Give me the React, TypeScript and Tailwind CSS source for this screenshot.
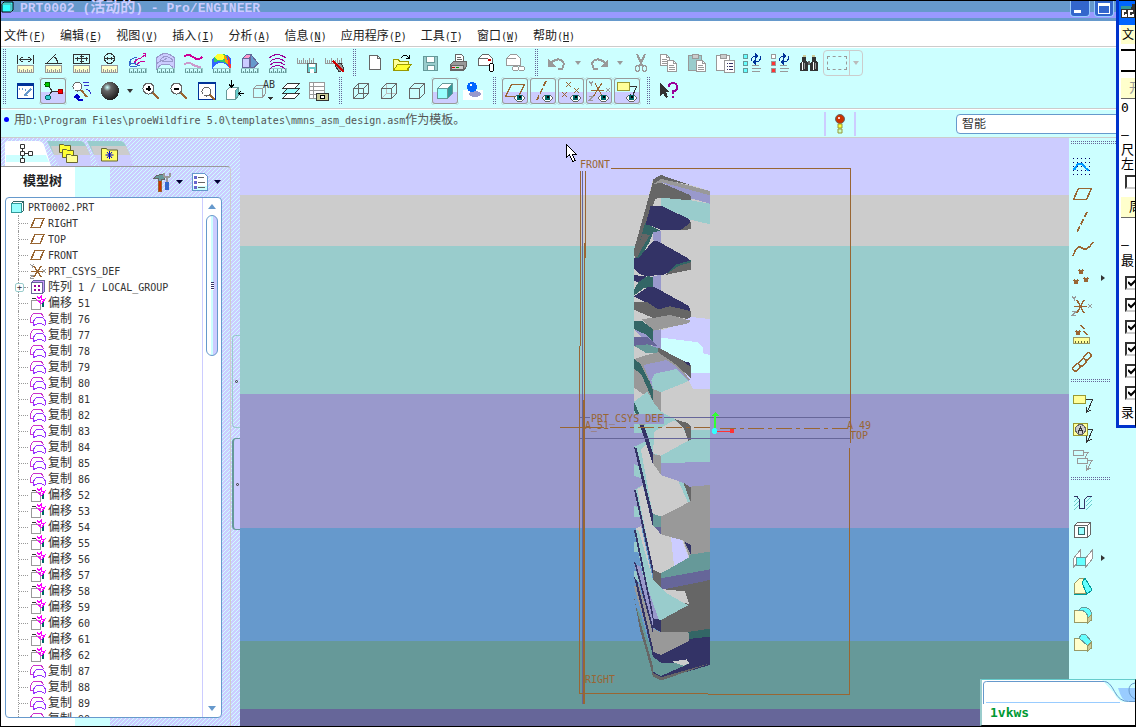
import type { ReactNode } from 'react';

const MONO = "font-['DejaVu_Sans_Mono','Noto_Sans_CJK_SC',monospace]";
const HATCH =
  'bg-[linear-gradient(135deg,#ccffff_12.5%,#ccccff_12.5%,#ccccff_50%,#ccffff_50%,#ccffff_62.5%,#ccccff_62.5%)] bg-[size:4px_4px]';
const DOTS = 'bg-[conic-gradient(#666699_25%,transparent_0)] bg-[size:2px_2px]';

/* Latin runs are set smaller than the Chinese ones so that both keep a 6px / 12px grid */
function Mixed({ text }: { text: string }) {
  return (
    <>
      {text.split(/([\u3000-\u9fff]+)/).map((part, i) => (
        <span key={i} className={i % 2 ? 'text-[12px]' : 'text-[10px]'}>{part}</span>
      ))}
    </>
  );
}

function Ico({ children, stroke = '#333333' }: { children: ReactNode; stroke?: string }) {
  return (
    <svg viewBox="0 0 24 24" fill="none" stroke={stroke} shapeRendering="crispEdges" className="size-6 shrink-0" aria-hidden="true">
      {children}
    </svg>
  );
}

/* ---------- shared icon parts ---------- */

const Ruler = (
  <g>
    <rect x="4.5" y="14.5" width="16" height="7" fill="#ffffcc" stroke="#999999" />
    <path d="M6.5 18v3M8.5 19v2M10.5 18v3M12.5 19v2M14.5 18v3M16.5 19v2M18.5 18v3" stroke="#999999" />
  </g>
);
const RulerSmall = (
  <g>
    <path d="M4 17.5h17v4h-17z" fill="#ccffff" stroke="#99cccc" />
    <path d="M4.5 18v4M6.5 20v2M8.5 18v4M10.5 20v2M12.5 18v4M14.5 20v2M16.5 18v4M18.5 20v2M20.5 18v4" stroke="#669999" />
  </g>
);
const RulerTicks = <path d="M4.5 7v5M6.5 9v3M8.5 9v3M10.5 7v5M12.5 9v3M14.5 9v3M16.5 7v5M18.5 9v3M20.5 7v5M4 12.5h18" stroke="#999999" />;
const Eye = (
  <g>
    <path d="M11 19l3-3h5l3 3-3 3h-5z" fill="#ffffff" stroke="#666666" />
    <rect x="14" y="16" width="5" height="5" fill="#006666" stroke="none" />
    <rect x="16" y="17" width="2" height="2" fill="#000000" stroke="none" />
  </g>
);
const Page = ({ x, y, c = '#999999' }: { x: number; y: number; c?: string }) => (
  <g transform={`translate(${x} ${y})`} stroke={c}>
    <path d="M.5 .5h6l3 3v8h-9z" fill="#ffffff" />
    <path d="M6.5 .5v3h3M2 5.5h5M2 7.5h6M2 9.5h6" />
  </g>
);
const Note = (
  <g>
    <rect x="2.5" y="3.5" width="12" height="8" fill="#ffff99" stroke="#999933" />
    <path d="M15 7.5h6.5l-5 12M15.5 15v5.500l5-3" stroke="#333333" />
  </g>
);
const Binocular = (
  <g>
    <path d="M5 6h4v4l2 2v8H3v-8l2-2zM15 6h4v4l2 2v8h-8v-8l2-2z" fill="#333333" stroke="none" />
    <path d="M11 10h2v4h-2z" fill="#666666" stroke="none" />
    <path d="M5.5 11v8M16.5 11v8" stroke="#ffffff" /><path d="M7.5 12v6M18.5 12v6" stroke="#999999" />
    <path d="M6 4.500h3M15 4.500h3" stroke="#cccc99" strokeWidth="2" />
  </g>
);

/* ---------- toolbar icons ---------- */

const icons = {
  distance: <Ico>{Ruler}<path d="M4.5 4v9M20.5 4v9M6 8.5h13M9.5 6l-3 2.500 3 2.500M15.5 6l3 2.500-3 2.500" /></Ico>,
  angle: <Ico>{Ruler}<path d="M4 12.5h17M6 12L15 3M13 6q4 2 3 6" /></Ico>,
  area: <Ico>{Ruler}<path d="M4.5 3.5h16v9h-16zM12.5 3v10M6 7.5h13M8 5.5v4M17 5.5v4M10.5 5.5h4M10.5 10.5h4" /></Ico>,
  diameter: <Ico>{Ruler}<circle cx="12.5" cy="7.5" r="5" /><path d="M7 7.5h11M10.5 6v3M14.5 6v3" /></Ico>,
  curvature: (
    <Ico>{RulerSmall}
      <path d="M8 7q-5 3-3 8M12 6q-9 2-6 8M4 12.5h6M5 15.5h7M10 8v5l5 2" stroke="#3366cc" />
      <path d="M9 12q2-4 7-5l5-4M11 14q4-4 9-4" stroke="#cc0099" /><path d="M18 2l3 1-1 3" stroke="#cc0099" />
    </Ico>
  ),
  surface: (
    <Ico stroke="#9999cc">
      <path d="M3.5 7q9-9 18 0v12q-3-6-9-6t-9 6z" fill="#ccccff" />
      <path d="M7 9q4-6 10-2t-1 4-6-1 4-3M3.500 13q4-4 6-3" />{RulerSmall}
    </Ico>
  ),
  waves: <Ico>{RulerSmall}<path d="M3 6q4-4 9 0t9 0" stroke="#cc0099" strokeWidth="2" /><path d="M3 14q4-4 8-1t9 3" stroke="#cc99cc" strokeWidth="2" /></Ico>,
  rainbow: (
    <Ico>
      <path d="M3 8q9-10 19-1v13q-4-8-10-8t-9 7z" fill="#3366ff" stroke="none" />
      <path d="M5 6q8-6 13-1v8q-5-4-13-2z" fill="#33cc66" stroke="none" />
      <ellipse cx="11" cy="6" rx="5" ry="3" fill="#ffff33" stroke="none" />
      <path d="M17 3q5 4 5 16l-3-5q1-6-2-11z" fill="#ff3333" stroke="none" />
      <path d="M15 4q4 3 4 9l-3-2z" fill="#ff9900" stroke="none" />{RulerSmall}
    </Ico>
  ),
  draft: (
    <Ico stroke="#666699">{RulerSmall}
      <path d="M5.500 7.500h7v9h-7z" fill="#ccccff" />
      <path d="M5.500 7.500l4-4h5l-2 4z" fill="#ff99cc" /><path d="M14 3.500l7 9-4 4h-4v-9z" fill="#6699cc" />
    </Ico>
  ),
  arcs: <Ico stroke="#990099">{RulerSmall}<path d="M4 7q8-7 17 0M5 10.500q7-6 15 0M5 14q7-6 15 0M5 17.500q7-6 15 0" /></Ico>,
  saveAnalysis: <Ico>{RulerTicks}<path d="M14.5 12.5h9v9h-9z" fill="#66cccc" stroke="#666666" /><path d="M16 13h6v3h-6zM17 18h4v4h-4z" fill="#ffffff" stroke="none" /></Ico>,
  dropAnalysis: <Ico>{RulerTicks}<path d="M14 14l6-2 3 6-5 3z" fill="#999999" /><path d="M12 10l11 11" stroke="#cc0000" strokeWidth="2" /></Ico>,

  newFile: <Ico stroke="#666666"><path d="M6.5 4.5h8l3 3v11h-11z" fill="#ffffff" /><path d="M14.5 4.5v3h3" /></Ico>,
  open: (
    <Ico stroke="#999900">
      <path d="M2.5 8.5h5l1 2h9v9h-15z" fill="#ffff99" /><path d="M2.5 19.5l4-6h14l-5 6z" fill="#ffff33" />
      <path d="M10 7q4-5 8 0M18.5 4v4M15 7.5h4" stroke="#000000" />
    </Ico>
  ),
  save: <Ico stroke="#669999"><path d="M4.5 5.5h14v14h-14z" fill="#99cccc" /><path d="M7.5 5.5h8v6h-8zM8.5 14.5h7v5h-7z" fill="#ffffff" /></Ico>,
  print: (
    <Ico stroke="#666666">
      <path d="M8.5 11.5v-8h6l2 2v6z" fill="#ffffff" /><path d="M10 6.5h4M10 8.5h5" />
      <path d="M3.5 13.5l3-3h13v5l-3 4h-13z" fill="#999999" /><path d="M4 14h12v4h-12z" fill="#cccccc" />
      <path d="M5 16.5h3" stroke="#cc0000" /><path d="M9 16.5h3" stroke="#009900" />
    </Ico>
  ),
  mail: (
    <Ico stroke="#666666">
      <path d="M3.5 14.5v-7l4-4h6l4 4v7z" fill="#ffffff" /><path d="M4 7.500h9" /><path d="M13 8.5h3" stroke="#cc0000" strokeWidth="2" />
      <rect x="14.5" y="12.5" width="4" height="8" rx="2" fill="#ffffff" stroke="#000000" />
    </Ico>
  ),
  mailLink: (
    <Ico stroke="#999999">
      <path d="M3.5 14.5v-7l4-4h6l4 4v7z" fill="#ffffff" /><path d="M4 7.500h9" />
      <rect x="9.5" y="15.5" width="6" height="4" rx="2" fill="#ffffff" /><rect x="15.5" y="15.5" width="6" height="4" rx="2" fill="#ffffff" />
    </Ico>
  ),
  undo: <Ico stroke="#999999"><path d="M6 12q5-5 10-3t1 9h-4" strokeWidth="2" /><path d="M3 8v8h8z" fill="#999999" stroke="none" /></Ico>,
  redo: <Ico stroke="#999999"><path d="M18 12q-5-5-10-3t-1 9h4" strokeWidth="2" /><path d="M21 8v8h-8z" fill="#999999" stroke="none" /></Ico>,
  cut: <Ico stroke="#999999"><path d="M8 3l4 9 2 4M16 3l-4 9-2 4" strokeWidth="2" /><ellipse cx="8.5" cy="17.5" rx="2" ry="3" /><ellipse cx="15.5" cy="17.5" rx="2" ry="3" /></Ico>,
  copy: <Ico><Page x={3} y={3} /><Page x={10} y={9} /></Ico>,
  paste: <Ico stroke="#999999"><path d="M3.5 4.5h13v15h-13z" fill="#99cccc" /><path d="M7 3h6v4h-6z" fill="#cccccc" /><Page x={11} y={9} /></Ico>,
  pasteSpecial: <Ico stroke="#999999"><path d="M3.5 4.5h13v15h-13z" fill="#ffffff" /><path d="M7 3h6v4h-6z" fill="#cccccc" /><path d="M11.5 9.5h10v12h-10z" fill="#ffffff" /><path d="M14 12.5h1M16 12.5h4M14 15.5h1M16 15.5h4M14 18.5h1M16 18.5h4" stroke="#333366" /></Ico>,
  regen: (
    <Ico stroke="#669999">
      <path d="M2.5 3.5h4v4h-4zM2.5 10.5h4v4h-4zM2.5 17.5h4v4h-4z" fill="#66ffff" />
      <path d="M10 10q0-5 5-5M20 5q0 6-6 6" stroke="#003399" /><path d="M14 2l4 3-4 3zM15 8l-4 3 4 3z" fill="#003399" stroke="none" />
      <path d="M11 14.5h7M11 17.5h9M11 20.5h8" stroke="#999999" />
    </Ico>
  ),
  regenManager: (
    <Ico stroke="#999999">
      <path d="M2.5 3.5h4v4h-4z" fill="#ffffff" /><path d="M2.5 10.5h4v4h-4zM2.5 17.5h4v4h-4z" fill="#ff3333" />
      <path d="M10 10q0-5 5-5M20 5q0 6-6 6" stroke="#003399" /><path d="M14 2l4 3-4 3zM15 8l-4 3 4 3z" fill="#003399" stroke="none" />
      <path d="M11 14.5h7M11 17.5h9M11 20.5h8" />
    </Ico>
  ),
  find: <Ico>{Binocular}</Ico>,

  repaint: <Ico stroke="#003399"><path d="M4.5 4.5h16v15h-16z" fill="#ffffff" /><path d="M4 5h17" strokeWidth="3" /><path d="M6 10q9-1 8 9" stroke="#6699cc" strokeDasharray="1 2" strokeWidth="2" /><path d="M11 17l7-7" stroke="#6699cc" strokeWidth="2" /></Ico>,
  spin: (
    <Ico>
      <path d="M7 6l4 6M11 12.5h7M11 12l-4 6" />
      <circle cx="6.5" cy="5.5" r="2.500" fill="#00cc00" stroke="#006600" /><circle cx="19.5" cy="12.5" r="2.500" fill="#ff0000" stroke="#990000" /><circle cx="7" cy="18.5" r="2.500" fill="#33cccc" stroke="#006666" />
    </Ico>
  ),
  orient: <Ico><circle cx="8.5" cy="7.5" r="4.500" fill="#ffffff" stroke="#666666" /><path d="M12 11l6 7" stroke="#996633" strokeWidth="2" /><path d="M14 3.5h6M15 6.5h5M17 11q5-1 4 5" stroke="#3333cc" /><path d="M14 21q-6 1-6-4M5 19l3-3 3 3" stroke="#0000cc" strokeWidth="2" /></Ico>,
  sphere: (
    <Ico stroke="none">
      <defs><radialGradient id="ball" cx=".35" cy=".3" r=".7"><stop offset="0" stopColor="#ccffff" /><stop offset=".3" stopColor="#666666" /><stop offset="1" stopColor="#222222" /></radialGradient></defs>
      <circle cx="13" cy="12" r="9" fill="url(#ball)" />
    </Ico>
  ),
  zoomIn: <Ico stroke="#666666"><circle cx="9.5" cy="9.5" r="5.500" fill="#ffffff" /><path d="M14 14l6 6" stroke="#996633" strokeWidth="2" /><path d="M7 9.5h5M9.5 7v5" stroke="#000000" strokeWidth="2" /></Ico>,
  zoomOut: <Ico stroke="#666666"><circle cx="9.5" cy="9.5" r="5.500" fill="#ffffff" /><path d="M14 14l6 6" stroke="#996633" strokeWidth="2" /><path d="M7 9.5h5" stroke="#000000" strokeWidth="2" /></Ico>,
  refit: <Ico stroke="#003399"><path d="M3.5 3.5h17v17h-17z" fill="#ffffff" /><path d="M3 4h18" strokeWidth="2" /><circle cx="11.5" cy="12.5" r="4.500" stroke="#666666" /><path d="M15 16l5 5" stroke="#996633" strokeWidth="2" /></Ico>,
  reorient: <Ico stroke="#669999"><path d="M3.5 11.5l3-3h9v8l-3 4h-9z" fill="#ffffff" /><path d="M12.5 20.5v-9l3-3v8z" fill="#66cccc" /><path d="M8.5 1v7M6 5.5l2.500 2.500 2.500-2.500M15 14.5h6M18 12l-2.500 2.500 2.500 2.500" stroke="#000000" /></Ico>,
  views: (
    <Ico stroke="#999999">
      <path d="M2.5 9.5l3-3h9v8l-3 4h-9zM2.5 9.500h9v9" fill="#ccffff" />
      <path d="M16 18h6l-3 3z" fill="#333333" stroke="none" />
      <text x="12" y="9" fontSize="10" fill="#333333" stroke="none" fontFamily="DejaVu Sans Mono">AB</text>
    </Ico>
  ),
  layers: <Ico stroke="#333333"><path d="M3.5 19.5l5-5h12l-5 5z" fill="#ffffff" /><path d="M3.5 14.5l5-5h12l-5 5z" fill="#99ffff" /><path d="M3.5 9.5l5-5h12l-5 5z" fill="#ffffff" /></Ico>,
  viewManager: <Ico stroke="#999999"><path d="M2.5 3.5h15v16h-15z" fill="#ffffff" /><path d="M3 7.5h14M3 11.5h14M3 15.5h7M6.5 4v15" /><path d="M9.5 14.5h12v7h-12z" fill="#cccc99" stroke="#333333" /><circle cx="15.5" cy="18" r="2" fill="#fff" stroke="#000" /></Ico>,
  wireframe: <Ico stroke="#666666"><path d="M4.5 9.5h10v10h-10zM9.5 4.5h10v10h-10zM4.5 9.5l5-5M14.5 9.5l5-5M14.5 19.5l5-5M4.5 19.5l5-5" /></Ico>,
  hidden: <Ico stroke="#666666"><path d="M9.5 5v9.500h10M4.5 19.5l5-5" stroke="#bbbbbb" /><path d="M4.5 9.5h10v10h-10zM4.5 9.5l5-5h10v10l-5 5M14.5 9.5l5-5" /></Ico>,
  noHidden: <Ico stroke="#666666"><path d="M4.5 9.5h10v10h-10zM4.5 9.5l5-5h10v10l-5 5M14.5 9.5l5-5" /></Ico>,
  shaded: <Ico stroke="#669999"><path d="M4.5 9.5h10v10h-10z" fill="#99ffff" /><path d="M4.5 9.5l5-5h10l-5 5z" fill="#ffffff" /><path d="M14.5 9.5l5-5v10l-5 5z" fill="#339999" /></Ico>,
  realism: <Ico stroke="none"><path d="M2 11h20v10h-20z" fill="#ffffff" /><ellipse cx="14" cy="15" rx="6" ry="3" fill="#9999cc" /><circle cx="11" cy="8" r="5" fill="#0066ff" /><circle cx="10" cy="6" r="1" fill="#ffffff" /></Ico>,
  planes: <Ico stroke="#996633"><path d="M2.5 17.5l6-12h13l-6 12z" strokeWidth="1.500" />{Eye}</Ico>,
  axes: <Ico stroke="#996633"><path d="M15 2l-9 19" strokeWidth="1.500" strokeDasharray="6 2" />{Eye}</Ico>,
  points: <Ico stroke="#996633"><path d="M7 3l5 5M12 3l-5 5M15 9l5 5M20 9l-5 5M3 13l5 5M8 13l-5 5" />{Eye}</Ico>,
  csys: <Ico stroke="#996633"><path d="M4 11.5h13M6 18l9-14M8 4l7 13" /><path d="M2 2l2 3 2-3M4 5v2M19 9l4 4M23 9l-4 4M2 17.500h4l-4 4h4" stroke="#999999" />{Eye}</Ico>,
  notes: <Ico>{Note}{Eye}</Ico>,
  help: (
    <Ico stroke="none">
      <path d="M3 4v13l3-3 3 5 2-1-2-5h4z" fill="#333333" />
      <path d="M12 8q0-4 4-4t4 4-4 4v3M16 16.500v2" stroke="#990099" strokeWidth="2" />
    </Ico>
  ),

  sketch: (
    <Ico>
      <path d="M2.5 4v17M6.5 4v17M10.5 4v17M14.5 4v17M18.5 4v17" stroke="#000066" strokeDasharray="1 3" />
      <path d="M2 14.500h2l3-5h4l4 5 3 2" stroke="#0099ff" strokeWidth="2" />
    </Ico>
  ),
  plane: <Ico stroke="#996633"><path d="M2.5 17.5l5-11h13l-5 11z" strokeWidth="1.500" /></Ico>,
  axis: <Ico stroke="#996633"><path d="M16 2L6 22" strokeWidth="1.500" strokeDasharray="6 2" /></Ico>,
  curve: <Ico stroke="#996633"><path d="M2 18q4-12 9-8t11-6" strokeWidth="1.500" /></Ico>,
  point: <Ico stroke="#996633"><path d="M8 4l4 4M12 4l-4 4M3 14l4 4M7 14l-4 4M13 12l4 4M17 12l-4 4" strokeWidth="1.500" /></Ico>,
  csysSet: <Ico stroke="#996633"><path d="M3 12.5h13M6 19l7-13M6 6l7 13" strokeWidth="1.500" /><path d="M1 2l2 3 2-3M3 5v2M17 10l4 4M21 10l-4 4M1 17.500h4l-4 4h4" stroke="#999999" /></Ico>,
  analysis: <Ico stroke="#996633"><path d="M5 9l4 4M9 9l-4 4M10 3l3 4M13 9l3 4" strokeWidth="1.500" /><path d="M2.5 15.5h16v6h-16z" fill="#ffff99" stroke="#999966" /><path d="M4.500 19v2M7.500 19v2M10.500 19v2M13.500 19v2M16.500 19v2" stroke="#666633" /></Ico>,
  reference: <Ico stroke="#996633"><g strokeWidth="1.500"><rect x="1" y="15" width="8" height="5" rx="2" transform="rotate(-45 5 17)" /><rect x="7" y="10" width="8" height="5" rx="2" transform="rotate(-45 11 12)" /><rect x="12" y="4" width="8" height="5" rx="2" transform="rotate(-45 16 6)" /></g></Ico>,
  note: <Ico>{Note}</Ico>,
  symbol: <Ico><path d="M2.5 3.5h14v12h-14z" fill="#ffff99" stroke="#999933" /><circle cx="9.5" cy="9.5" r="5" fill="#cccccc" stroke="#666666" /><path d="M7 12.500l2.500-5 2.500 5M8 10.5h3" stroke="#333333" /><path d="M17 9.500h4.500l-5 12M15.500 16v6l5-3" /></Ico>,
  notes2: <Ico stroke="#999999"><path d="M2.5 2.5h10v5h-10zM6.5 10.5h10v5h-10zM13 4.5h4l-3 5M17 12.5h4l-5 9M15.500 17v5l4-2" /></Ico>,
  hole: <Ico stroke="#66cccc"><path d="M3 12l4-4M3 16l5-5M3 20l5-5M15 12l5-5M15 16l6-6M15 20l6-6" /><path d="M3 6.5h3l2.500 3v9h5v-9l3-3h4" stroke="#333366" /></Ico>,
  shell: <Ico stroke="#666666"><path d="M3.5 7.5l3-3h13v12l-3 3h-13z" fill="#ffffff" /><path d="M3.5 7.5h13v12M16.5 7.5l3-3" /><path d="M7.5 9.5h6v7h-6z" fill="#99ffff" stroke="#336666" /></Ico>,
  rib: <Ico stroke="#999999"><path d="M2.5 12.5l7-9v9l-7 9zM14.5 12.5l7-9v9l-7 9z" fill="#ffffff" /><path d="M5.5 11.5h9v8h-9z" fill="#66ffff" stroke="#669999" /></Ico>,
  draftFeature: <Ico stroke="#999966"><path d="M3.5 9.5l5-5h6v15h-11z" fill="#ffffcc" /><path d="M14 4l7 12-5 4-5-11z" fill="#66ffff" stroke="#009999" /><path d="M3 20.5h13" stroke="#009999" /></Ico>,
  round: <Ico stroke="#999966"><path d="M3.5 8.5h5q8 0 8 7v5h-13z" fill="#ffffcc" /><path d="M8 8l3-3q9 0 10 8l-4 3q-1-8-9-8z" fill="#66ffff" stroke="#669999" /><path d="M16.5 16l4-3v5l-4 3z" fill="#cccc99" /></Ico>,
  chamfer: <Ico stroke="#999966"><path d="M3.5 8.5h5l8 7v5h-13z" fill="#ffffcc" /><path d="M8 8l3-4h3l7 8-4 4z" fill="#66ffff" stroke="#669999" /><path d="M16.5 16l4-4v6l-4 3z" fill="#cccc99" /></Ico>,
};

type IconName = keyof typeof icons;

function ToolButton({ name, pressed = false }: { name: IconName; pressed?: boolean }) {
  return (
    <button
      type="button"
      aria-label={name}
      aria-pressed={pressed}
      className={
        'flex h-7 w-7 shrink-0 items-center justify-center ' +
        (pressed ? 'rounded bg-linear-to-b from-[#ccffff] from-55% to-[#ccccff] to-55% shadow-[inset_0_0_0_1px_#ccffff,inset_0_0_0_2px_#999999]' : '')
      }
    >
      {icons[name]}
    </button>
  );
}

const Tools = ({ names, pressed = [] }: { names: IconName[]; pressed?: IconName[] }) => (
  <>{names.map((n) => <ToolButton key={n} name={n} pressed={pressed.includes(n)} />)}</>
);

const Grip = () => <span className={`mx-[5px] h-7 w-1 shrink-0 ${DOTS}`} />;
const FlatGrip = ({ wide = false }) => (
  <span className={`mt-[3px] mb-[7px] ml-px h-1 shrink-0 ${wide ? 'w-12' : 'w-10'} ${DOTS}`} />
);

const DropArrow = ({ color = '#999999', label }: { color?: string; label: string }) => (
  <button type="button" aria-label={label} className="flex h-7 w-3.5 shrink-0 items-center justify-center">
    <svg viewBox="0 0 8 4" className="h-1 w-2" aria-hidden="true"><path d="M1 0h6L4 4z" fill={color} /></svg>
  </button>
);

/* ---------- title, menu, message bar ---------- */

const menus = [
  ['文件', 'F'], ['编辑', 'E'], ['视图', 'V'], ['插入', 'I'], ['分析', 'A'],
  ['信息', 'N'], ['应用程序', 'P'], ['工具', 'T'], ['窗口', 'W'], ['帮助', 'H'],
];

function TitleBar() {
  return (
    <header className="flex h-[21px] shrink-0 items-center justify-between border-t border-black bg-[linear-gradient(#6699cc_11px,#9999ff_11px,#9999ff_17px,#6699cc_17px)] pr-[22px]">
      <h1 className="flex h-full items-start gap-1.5 font-['Liberation_Mono','Noto_Sans_CJK_SC',monospace] text-[13px] leading-4 font-bold text-[#ccccff]">
        <svg viewBox="0 0 13 12" className="h-3 w-[13px]" aria-hidden="true">
          <path d="M1 3l2-2h9v8l-2 2H1z" fill="#33ffff" stroke="#000" /><path d="M1 3h9v8" fill="none" stroke="#669999" />
        </svg>
        <span>PRT0002 (<span className="text-[15px] leading-3">活动的</span>) - Pro/ENGINEER</span>
      </h1>
      <div className="flex h-full gap-1">
        <button type="button" aria-label="最小化" className="flex h-4 w-5 items-end rounded-b-sm border border-t-0 border-[#99ccff] bg-[#3366cc] p-[3px]">
          <span className="h-[3px] w-[7px] bg-white" />
        </button>
        <button type="button" aria-label="最大化" className="flex h-4 w-5 items-center justify-center rounded-b-sm border border-t-0 border-[#99ccff] bg-[#3366cc]">
          <span className="h-[11px] w-3 border border-t-[3px] border-white" />
        </button>
      </div>
    </header>
  );
}

function MessageBar() {
  return (
    <div className="flex h-7 shrink-0 items-center border-b border-[#cccccc] bg-[#ccffff]">
      <p className="flex min-w-0 flex-1 items-center gap-[5px] pb-2 pl-[3px] leading-4 whitespace-nowrap text-[#555555]">
        <span className="size-[5px] rounded-full bg-[#0000ff]" />
        <span><Mixed text="用D:\Program Files\proeWildfire 5.0\templates\mmns_asm_design.asm作为模板。" /></span>
      </p>
      <div className="mr-[100px] flex h-6 w-8 items-center justify-center border-x-2 border-[#ccccff]">
        <svg viewBox="0 0 10 20" className="h-5 w-2.5" aria-hidden="true">
          <circle cx="5" cy="5" r="4.500" fill="#cc3300" stroke="#666666" /><path d="M3 3h2v2H3z" fill="#ffcccc" />
          <path d="M3 10h4v4H3z" fill="#ffff33" stroke="#999933" /><path d="M3 15h4v4H3z" fill="#ccffcc" stroke="#999933" />
        </svg>
      </div>
      <select aria-label="选择过滤器" className={`h-5 w-[180px] shrink-0 appearance-none rounded-sm border border-[#6699cc] bg-white pl-[5px] text-[12px] leading-none text-[#333333] ${MONO}`}>
        <option>智能</option>
      </select>
    </div>
  );
}

/* ---------- model tree ---------- */

type Kind = 'part' | 'plane' | 'csys' | 'pattern' | 'offset' | 'copy';
const range = (from: number, to: number) => Array.from({ length: to - from + 1 }, (_, i) => from + i);

const tree: { kind: Kind; text: string }[] = [
  { kind: 'part', text: 'PRT0002.PRT' },
  { kind: 'plane', text: 'RIGHT' },
  { kind: 'plane', text: 'TOP' },
  { kind: 'plane', text: 'FRONT' },
  { kind: 'csys', text: 'PRT_CSYS_DEF' },
  { kind: 'pattern', text: '阵列 1 / LOCAL_GROUP' },
  { kind: 'offset', text: '偏移 51' },
  ...range(76, 86).map((n) => ({ kind: 'copy' as Kind, text: `复制 ${n}` })),
  ...range(52, 62).map((n) => ({ kind: 'offset' as Kind, text: `偏移 ${n}` })),
  ...range(87, 90).map((n) => ({ kind: 'copy' as Kind, text: `复制 ${n}` })),
];

const treeIcons: Record<Kind, ReactNode> = {
  part: <><path d="M1.5 4.5h10v9h-10z" fill="#99ffff" stroke="#339999" /><path d="M1.5 4.5l2-2h10v9l-2 2M11.5 4.5l2-2" fill="none" stroke="#336666" /></>,
  plane: <path d="M1 12.5l4-9h9l-4 9z" fill="none" stroke="#996633" strokeWidth="1.500" />,
  csys: <><path d="M1 8.5h12M4 14l7-11M4 3l7 11" stroke="#996633" strokeWidth="1.500" /><path d="M0 1l2 2 2-2M2 3v2M12 6l4 4M16 6l-4 4M0 12h4l-4 3h4" fill="none" stroke="#999999" /></>,
  pattern: <><path d="M1.5 3.5l2-2h11v11l-2 2h-11z" fill="#cc99ff" stroke="#666699" /><path d="M1.5 3.5h11v11h-11z" fill="#ffffff" stroke="#666699" /><path d="M4 6h2v2H4zM8 6h2v2H8zM4 10h2v2H4zM8 10h2v2H8z" fill="#990099" /></>,
  offset: (
    <>
      <path d="M1.5 5.5h9v9h-9z" fill="#ffffff" stroke="#999999" /><path d="M2 3.500h4" stroke="#333333" /><path d="M12.500 7v5" stroke="#006666" strokeWidth="2" />
      <path d="M6 4l4 4h2l3-4-4 1V1L9 4 7 1M9 8l2-3" fill="none" stroke="#ff00ff" />
    </>
  ),
  copy: (
    <g fill="none">
      <path d="M.5 12V7q1-5 7-5 5 0 6 4M.500 11.500h2" stroke="#cc33cc" />
      <path d="M3.500 15v-4q1-5 6-5 5 0 6 5v3M3.500 14.500l2-1q5-2 10 1" stroke="#9933ff" />
    </g>
  ),
};

function TreeRow({ kind, text }: { kind: Kind; text: string }) {
  const root = kind === 'part';
  return (
    <li className={'flex h-4 items-center whitespace-nowrap ' + (root ? 'gap-0.5 pl-1' : 'gap-0.5')}>
      {!root && (
        <span className="flex h-4 w-[22px] shrink-0 items-center">
          <span className="ml-3 h-4 w-px border-l border-dotted border-[#999999]" />
          {kind === 'pattern' && (
            <button type="button" aria-label="展开" className="-ml-1 flex size-[9px] items-center justify-center rounded-xs border border-[#99cccc] bg-white text-[9px] leading-none text-[#333333]">+</button>
          )}
          <span className="h-px flex-1 border-t border-dotted border-[#999999]" />
        </span>
      )}
      <svg viewBox="0 0 16 16" className="size-4 shrink-0" shapeRendering="crispEdges" aria-hidden="true">{treeIcons[kind]}</svg>
      <span className="leading-4 text-[#333333]"><Mixed text={text} /></span>
    </li>
  );
}

function TreePanel() {
  return (
    <div className="flex min-h-0 w-[230px] flex-col">
      <div className="flex h-7 shrink-0 items-end pt-[3px]">
        <button type="button" aria-label="模型树" className="h-[25px]">
          <svg viewBox="0 0 46 25" className="ml-1 h-[25px] w-[46px]" aria-hidden="true">
            <path d="M0 25V3q0-3 3-3h30q4 0 6 4l7 21z" fill="#ffffff" /><path d="M1 14h40l3 7H1z" fill="#ccffff" />
            <path d="M15.5 3.5h4v4h-4zM15.5 10.5h4v4h-4zM15.5 17.5h4v4h-4zM23.5 10.5h4v4h-4zM17.5 8v2M17.5 15v2M20 12.5h3" fill="#fff" stroke="#333" />
          </svg>
        </button>
        <button type="button" aria-label="文件夹浏览器" className="-ml-1 h-[25px]">
          <svg viewBox="0 0 44 25" className="h-[25px] w-11" aria-hidden="true">
            <path d="M0 0h33q4 0 6 5l4 9H7z" fill="#99cccc" /><path d="M4 5h35l4 9H7z" fill="#cccccc" /><path d="M7 14h36l1 11H12z" fill="#ccccff" />
            <g fill="#ffff33" stroke="#666633"><path d="M12.5 3.5h4l1 1h6v7h-11z" /><path d="M15.5 8.5h4l1 1h6v7h-11z" /><path d="M19.5 13.5h4l1 1h6v7h-11z" fill="#ffff99" /></g>
          </svg>
        </button>
        <button type="button" aria-label="收藏夹" className="-ml-1 h-[25px]">
          <svg viewBox="0 0 46 25" className="h-[25px] w-[46px]" aria-hidden="true">
            <path d="M0 0h33q4 0 6 5l4 9H7z" fill="#99cccc" /><path d="M4 5h35l4 9H7z" fill="#cccccc" /><path d="M7 14h36l3 11H12z" fill="#ccccff" />
            <path d="M14.5 7.5h5l1 1.500h10v11h-16z" fill="#ffff66" stroke="#666633" /><path d="M22.5 10v8M18.5 14h8M20 11l5 6M25 11l-5 6" stroke="#0000cc" />
          </svg>
        </button>
      </div>
      <div className="flex min-h-0 flex-1 flex-col rounded-tr border-t border-r border-[#999999] border-r-[#cccccc] bg-[linear-gradient(90deg,#ffffff_74px,#ccffff_74px,#ccffff_109px,transparent_109px)] pr-2 pb-2 pl-1">
        <div className="flex h-[30px] shrink-0 items-center">
          <h2 className="flex-1 pb-1 pl-[18px] text-[13px] leading-none font-bold text-[#222222]">模型树</h2>
          <button type="button" aria-label="设置" className="flex h-6 w-[38px] items-center gap-1">
            <svg viewBox="0 0 20 20" className="size-5" shapeRendering="crispEdges" aria-hidden="true">
              <path d="M2 6q3-4 10-3v4H9v2H6V6z" fill="#669999" stroke="#666666" /><path d="M6.500 9v10h3V9" fill="#cc3300" stroke="#996633" />
              <path d="M12 1v3l3 2 3-2V1M15 6v5" fill="none" stroke="#999999" strokeWidth="2" /><path d="M13 10h4v8h-4z" fill="#3366cc" />
            </svg>
            <svg viewBox="0 0 8 4" className="h-1 w-2" aria-hidden="true"><path d="M0 0h7L3.5 4z" fill="#000033" /></svg>
          </button>
          <button type="button" aria-label="显示" className="flex h-6 w-8 items-center gap-1">
            <svg viewBox="0 0 20 20" className="size-5" shapeRendering="crispEdges" aria-hidden="true">
              <path d="M2.5 1.5h12l3 3v14h-15z" fill="#ffffff" stroke="#6699cc" /><path d="M3 14h14v4H3z" fill="#ccffff" />
              <path d="M8 5.5h6M8 10.5h7M8 15.5h7" stroke="#666666" /><path d="M4 4h3v3H4zM4 9h3v3H4zM4 14h3v3H4z" fill="#6666cc" />
            </svg>
            <svg viewBox="0 0 8 4" className="h-1 w-2" aria-hidden="true"><path d="M0 0h7L3.5 4z" fill="#000033" /></svg>
          </button>
        </div>
        <div className="flex min-h-0 flex-1 overflow-hidden rounded border border-[#6699cc] bg-white">
          <ul className="min-w-0 flex-1 overflow-hidden pt-px">
            {tree.map((row) => <TreeRow key={row.text} {...row} />)}
          </ul>
          <div className="flex w-[19px] flex-col items-center border-l border-[#ccccff] py-1">
            <svg viewBox="0 0 8 5" className="mt-0.5 h-[5px] w-2" aria-hidden="true"><path d="M0 5h8L4 0z" fill="#6699cc" /></svg>
            <span className="mt-1.5 flex h-[141px] w-3 items-center justify-center rounded-full border border-[#6699cc] bg-[linear-gradient(90deg,#ffffff_40%,#ccffff_40%,#ccffff_60%,#ccccff_60%)]">
              <span className="h-2 w-[3px] bg-[repeating-linear-gradient(#333366_0_1px,#ffffff_1px_2px)]" />
            </span>
            <svg viewBox="0 0 8 5" className="mt-auto mb-0.5 h-[5px] w-2" aria-hidden="true"><path d="M0 0h8L4 5z" fill="#6699cc" /></svg>
          </div>
        </div>
      </div>
    </div>
  );
}

/* ---------- graphics area ---------- */

const upperTeeth: [string, string][] = [
  ['#cccccc', '279,133 303,122 450,168 450,900 222,900 222,345'],
  ['#999999', '279,135 303,130 450,168 450,183 303,143 279,152'],
  ['#9999cc', '303,141 450,181 450,206 392,190'],
  ['#666666', '279,133 303,120 392,150 303,132 279,148'],
  ['#666666', '279,148 303,143 385,178 392,185 392,196 345,193 303,188 286,192 279,212 232,368 224,368 222,345 279,140'],
  ['#99cccc', '303,188 392,196 450,206 450,268 392,254 303,212'],
  ['#336666', '255,264 302,287 279,292 270,318 240,372 226,370'],
  ['#666666', '248,296 270,300 240,350 232,368 224,365'],
  ['#333366', '272,212 303,212 387,252 392,262 362,285 303,285 280,275 257,268'],
  ['#666666', '362,285 392,262 392,283'],
  ['#9999cc', '279,292 303,287 303,324 279,316'],
  ['#333366', '279,318 292,318 385,370 392,380 310,420 255,423 240,418 222,402 222,370 237,368'],
  ['#336666', '392,376 392,384 316,420 350,388'],
  ['#666666', '392,382 392,404 316,420 355,393'],
  ['#333366', '222,420 262,425 240,444 222,438'],
  ['#9999cc', '279,423 303,420 303,470 279,460'],
  ['#336666', '236,440 262,424 279,425 279,458 250,460 222,482 222,465'],
  ['#333366', '262,457 285,457 385,512 392,528 330,516 295,523 222,484'],
  ['#666666', '222,502 262,502 295,523 330,514 392,528 392,555 330,540 279,549 222,524'],
  ['#ccccff', '330,577 392,546 450,552 450,762 303,766 303,587'],
  ['#999999', '245,552 279,549 330,540 392,557 385,565 279,587'],
  ['#9999cc', '222,585 279,587 303,583 303,644 279,635'],
  ['#336666', '222,557 245,557 279,583 279,618 260,600 222,582'],
  ['#666699', '222,605 262,605 295,635 262,628 222,632'],
  ['#669999', '222,632 262,628 295,640 295,655 260,655'],
  ['#ccffff', '303,608 415,622 430,640 430,655 450,660 450,713 392,713 392,690 303,642'],
  ['#999999', '222,672 260,660 303,650 350,680 392,738 340,712 270,735 303,768 303,830 279,798 222,758'],
  ['#9999cc', '250,690 320,675 350,695 388,738 303,772 279,762'],
  ['#99cccc', '274,735 285,716 350,702 386,738 303,772 279,762'],
  ['#666666', '295,638 375,680 392,690 392,730 350,690 295,652'],
  ['#333366', '370,678 388,683 392,697'],
  ['#cccccc', '303,772 386,738 400,762 450,762 450,900 303,900'],
  ['#336666', '222,672 240,685 270,742 279,765 279,798 245,720 222,700'],
  ['#99cccc', '222,800 262,770 279,798 303,828 350,850 385,872 392,900 222,900'],
  ['#336666', '222,800 238,836 228,836 222,825'],
];

const lowerTeeth: [string, string][] = [
  ['#9999cc', '222,100 450,100 450,300 222,300'],
  ['#99cccc', '222,192 240,200 243,235 222,228'],
  ['#99cccc', '222,318 243,325 245,352 222,350'],
  ['#99cccc', '222,425 243,430 245,460 222,455'],
  ['#99cccc', '222,512 240,520 240,550 222,535'],
  ['#99cccc', '240,0 279,0 303,35 350,60 392,90 450,90 450,185 303,190 279,165 250,60'],
  ['#999999', '279,0 303,0 303,35 279,5'],
  ['#cccccc', '303,0 450,0 450,90 392,90 350,60 303,35'],
  ['#cccccc', '283,95 340,62 365,70 385,122 303,167 279,160'],
  ['#666666', '345,58 385,70 392,80 392,120 385,122 372,85'],
  ['#999999', '303,345 392,260 450,255 450,456 385,470 303,410'],
  ['#669999', '303,520 385,465 450,455 450,508 303,535'],
  ['#666699', '303,535 450,508 450,540 330,567 303,567'],
  ['#666666', '303,570 450,540 450,686 392,695 303,697'],
  ['#336666', '385,696 450,686 450,711 385,717'],
  ['#333366', '279,750 385,717 450,710 450,795 303,838 279,820'],
  ['#99cccc', '222,140 262,122 279,180 279,345'],
  ['#999999', '279,162 303,167 303,225 279,190'],
  ['#cccccc', '243,150 262,130 279,190 303,225 355,243 388,306 303,350 279,345'],
  ['#99cccc', '355,243 375,252 390,306 384,308'],
  ['#666666', '370,248 392,262 392,305'],
  ['#669999', '279,342 303,350 303,380 279,380'],
  ['#666699', '279,380 303,380 303,403 279,378'],
  ['#99cccc', '222,270 248,255 279,380 279,508 235,330'],
  ['#cccccc', '232,268 248,256 279,375 303,403 370,422 388,472 303,520 279,508'],
  ['#ccccff', '333,412 366,420 386,472 342,498'],
  ['#333366', '372,424 392,434 392,464'],
  ['#666666', '279,508 303,520 303,565 279,545'],
  ['#cccccc', '228,385 243,378 279,540 303,567 375,574 388,612 330,600 279,580'],
  ['#99cccc', '222,390 236,392 279,540 320,580 384,616 303,660 275,655'],
  ['#666666', '374,573 392,580 392,605 388,610'],
  ['#9999cc', '222,490 240,500 295,655 279,690'],
  ['#333366', '279,655 303,660 303,697 279,682'],
  ['#999999', '222,560 236,552 279,685 303,697 385,695 388,722 303,765 279,755'],
  ['#333366', '279,755 303,765 303,790 279,770'],
  ['#669999', '228,620 240,640 279,770 303,788 330,788 385,792 303,828 279,815 250,710'],
  ['#cccccc', '335,785 380,778 388,790 370,797'],
  ['#333366', '240,75 252,75 279,160 279,192'],
  ['#333366', '222,140 230,145 279,345 279,382'],
  ['#333366', '222,270 228,272 279,500 279,525'],
  ['#333366', '222,390 228,392 279,640 279,662'],
  ['#333366', '222,485 228,490 279,680 279,700'],
  ['#333366', '222,530 232,545 279,745 279,770'],
  ['#666666', '222,590 228,620 279,800 279,830 262,765 240,690'],
  ['#666666', '279,818 303,832 450,790 303,842 279,830'],
];

const Facets = ({ faces }: { faces: [string, string][] }) => (
  <>{faces.map(([fill, points], i) => <polygon key={i} points={points} fill={fill} />)}</>
);

function Viewport() {
  return (
    <main className="relative flex min-w-0 flex-1 flex-col overflow-hidden">
      <div className="flex-[57] bg-[#ccccff]" />
      <div className="flex-[51] bg-[#cccccc]" />
      <div className="flex-[148] bg-[#99cccc]" />
      <div className="flex-[134] bg-[#9999cc]" />
      <div className="flex-[113] bg-[#6699cc]" />
      <div className="flex-[68] bg-[#669999]" />
      <div className="flex-[17] bg-[#666699]" />
      <svg viewBox="240 138 829 588" className="absolute inset-0 h-full w-full" shapeRendering="crispEdges" role="img" aria-label="PRT0002">
        <g transform="translate(560 135) scale(.33333)"><Facets faces={upperTeeth} /></g>
        <g transform="translate(560 400) scale(.33333)"><Facets faces={lowerTeeth} /></g>

        {/* datum planes and axes */}
        <g fill="none" stroke="#666699">
          <path d="M582.5 171V704M580 417.5H850M580 438.5H850" />
        </g>
        <g fill="none" stroke="#996633">
          <path d="M611 168.5H850.5V443M580.5 171V346M579.5 346V693.5H708M708 694.5H849.5V448M585.5 171V258M584.5 243V704M583.5 400V704" />
          <path d="M560 427.5H604" /><path d="M610 427.5H715" strokeDasharray="16 4 4 4" /><path d="M720 428.5H850" strokeDasharray="16 4 4 4" />
        </g>
        <rect x="590" y="414" width="74" height="10" fill="#9999cc" />
        <g fill="#996633" fontSize="10" fontFamily="'DejaVu Sans Mono', monospace">
          <text x="580" y="168">FRONT</text>
          <text x="591" y="422">PRT_CSYS_DEF</text>
          <text x="585" y="429">A_51</text>
          <text x="847" y="429">A_49</text>
          <text x="850" y="439">TOP</text>
          <text x="585" y="683">RIGHT</text>
        </g>

        {/* spin centre */}
        <path d="M715 430V413" stroke="#33ff33" strokeWidth="2" /><path d="M711 416l4-4 4 4z" fill="#33ff33" />
        <path d="M716 431.5H732" stroke="#ff3333" /><circle cx="732" cy="431" r="2.500" fill="#ff3333" />
        <circle cx="714.5" cy="431" r="3" fill="#33ffff" />

        <path d="M566.5 144.500v13l3-3 3 7 2.500-1-3-6.500h4z" fill="#ffffff" stroke="#000000" />
      </svg>
    </main>
  );
}

const Flyout = () => (
  <button type="button" aria-label="更多" className="flex h-7 w-3 items-center justify-center">
    <svg viewBox="0 0 4 6" className="h-1.5 w-1" aria-hidden="true"><path d="M0 0v6l4-3z" fill="#333333" /></svg>
  </button>
);

function FeatureBar() {
  return (
    <div className="flex w-[67px] shrink-0 flex-col items-start bg-[#ccffff]">
      <FlatGrip wide />
      <Tools names={['sketch', 'plane', 'axis', 'curve']} />
      <div className="flex"><ToolButton name="point" /><Flyout /></div>
      <Tools names={['csysSet', 'analysis', 'reference']} />
      <FlatGrip />
      <Tools names={['note', 'symbol', 'notes2']} />
      <FlatGrip />
      <Tools names={['hole', 'shell']} />
      <div className="flex"><ToolButton name="rib" /><Flyout /></div>
      <Tools names={['draftFeature', 'round', 'chamfer']} />
    </div>
  );
}

/* ---------- windows on top ---------- */

const Check = ({ on = true, label }: { on?: boolean; label: string }) => (
  <label className="relative flex h-[22px] shrink-0 items-center pl-1">
    <input type="checkbox" defaultChecked={on} aria-label={label} className="peer size-3.5 shrink-0 appearance-none border-2 border-[#cccccc] border-t-[#333333] border-l-[#333333] bg-white" />
    <svg viewBox="0 0 8 8" className="absolute left-[7px] hidden size-2 peer-checked:block" aria-hidden="true"><path d="M0 3l3 3 5-5" fill="none" stroke="#000" strokeWidth="2" /></svg>
  </label>
);

function RecorderWindow() {
  return (
    <section className="absolute top-0 right-0 flex h-[428px] w-5 flex-col overflow-hidden border-r border-b-[3px] border-l-[3px] border-r-black border-b-[#0033cc] border-l-[#0033cc] bg-white pl-0.5 text-[13px] leading-[14px] text-black">
      <div className="-ml-0.5 h-[25px] shrink-0 border-t border-black bg-[#0066ff] pt-[3px] pl-0.5">
        <svg viewBox="0 0 14 14" className="size-3.5" aria-hidden="true">
          <path d="M0 3h11V0h3v14H0z" fill="#333333" /><path d="M0 2h10v3H0z" fill="#339999" />
          <path d="M5 7H2v5h3v-2M12 7H8v5h4v-2" fill="none" stroke="#ffffff" strokeWidth="2" />
        </svg>
      </div>
      <div className="h-[19px] shrink-0 bg-[#ffffcc] pt-[3px] pl-px text-[12px]">文</div>
      <div className="mt-[5px] h-[23px] shrink-0 border-y-2 border-black" />
      <button type="button" className="mt-1.5 h-[21px] shrink-0 overflow-hidden border-b border-[#666666] bg-[#ffffcc] pl-2 text-left text-[#999999]">开</button>
      <p className="mt-0.5 h-[27px] shrink-0">0</p>
      <p className="h-[15px] shrink-0 overflow-hidden">—</p>
      <p className="shrink-0">尺</p>
      <p className="shrink-0">左</p>
      <Check on={false} label="左" />
      <button type="button" className="mt-1 h-[21px] shrink-0 overflow-hidden border-b border-[#666666] bg-[#ffffcc] pl-2 text-left">周</button>
      <p className="mt-5 h-4 shrink-0 overflow-hidden">—</p>
      <p className="h-[18px] shrink-0">最</p>
      {['1', '2', '3', '4', '5', '6'].map((n) => <Check key={n} label={n} />)}
      <p className="mt-0.5 shrink-0">录</p>
    </section>
  );
}

function ChatPopup() {
  return (
    <section className="absolute right-0 bottom-0 h-[47px] w-[156px] overflow-hidden border-t border-r border-b border-l-2 border-t-[#66cccc] border-r-black border-b-black border-l-[#99cccc] bg-white">
      <svg viewBox="0 0 153 24" className="block h-6 w-full" aria-hidden="true">
        <path d="M120 0h33v22h-10q-7 0-11-9z" fill="#ccffff" /><path d="M136 8h17v13h-9q-4 0-8-13z" fill="#99ccff" />
        <path d="M1.5 24V4q0-2.500 3-2.500h118q5 0 10 10t14 10h7" fill="none" stroke="#6699cc" />
        <path d="M153 3q-6 1-6 7t6 9" fill="none" stroke="#6699cc" />
        <path d="M4 22.5h134" stroke="#99ccff" />
      </svg>
      <p className="pt-px pl-2 font-['DejaVu_Sans_Mono',monospace] text-[13px] leading-4 font-bold text-[#009933]">1vkws</p>
    </section>
  );
}

export default function App() {
  return (
    <div className={`relative flex h-screen flex-col overflow-hidden border-b border-l border-black bg-[#ccffff] ${MONO}`}>
      <TitleBar />
      <nav className="flex h-[26px] shrink-0 items-center gap-3.5 border-b border-[#cccccc] bg-white pt-1.5 pl-[3px]">
        {menus.map(([name, key]) => (
          <button key={key} type="button" className="shrink-0 text-[12px] leading-4 whitespace-nowrap text-[#222222]">
            {name}<span className="text-[10px]">(<u>{key}</u>)</span>
          </button>
        ))}
      </nav>

      <div className="flex shrink-0 flex-col border-t border-b border-t-white border-b-[#cccccc] pt-px pb-[3px]">
        <div className="-ml-1 flex">
          <Grip />
          <Tools names={['distance', 'angle', 'area', 'diameter', 'curvature', 'surface', 'waves', 'rainbow', 'draft', 'arcs', 'saveAnalysis', 'dropAnalysis']} />
          <Grip />
          <Tools names={['newFile', 'open', 'save', 'print', 'mail', 'mailLink']} />
          <Grip />
          <ToolButton name="undo" /><DropArrow label="撤消列表" />
          <ToolButton name="redo" /><DropArrow label="重做列表" />
          <Tools names={['cut', 'copy', 'paste', 'pasteSpecial', 'regen', 'regenManager', 'find']} />
          <div className="mt-px flex h-[26px] items-center rounded-sm border border-[#cccccc]">
            <button type="button" aria-label="选取框" className="flex h-full w-[26px] items-center justify-center border-r border-[#cccccc]">
              <span className="h-3.5 w-5 border border-dashed border-[#999999]" />
            </button>
            <button type="button" aria-label="选取方式" className="flex w-3 justify-center">
              <svg viewBox="0 0 8 4" className="h-1 w-2" aria-hidden="true"><path d="M1 0h6L4 4z" fill="#bbbbbb" /></svg>
            </button>
          </div>
        </div>
        <div className="-ml-1 flex">
          <Grip />
          <Tools names={['repaint', 'spin', 'orient', 'sphere']} pressed={['spin']} />
          <DropArrow label="外观库" color="#333333" />
          <Tools names={['zoomIn', 'zoomOut', 'refit', 'reorient', 'views', 'layers', 'viewManager']} />
          <Grip />
          <Tools names={['wireframe', 'hidden', 'noHidden', 'shaded', 'realism']} pressed={['shaded']} />
          <Grip />
          <Tools names={['planes', 'axes', 'points', 'csys', 'notes']} pressed={['planes', 'axes', 'points', 'csys', 'notes']} />
          <Grip />
          <ToolButton name="help" />
        </div>
      </div>
      <div className="h-px shrink-0 bg-white" />
      <MessageBar />

      <div className="flex min-h-0 flex-1">
        <aside className={`flex w-[239px] shrink-0 ${HATCH}`}>
          <TreePanel />
          <div className="ml-px flex w-2 flex-col gap-2.5 pt-[197px]">
            <button type="button" aria-label="导航器" className="flex h-[93px] items-center justify-center rounded-l border border-r-0 border-[#99cccc]"><span className="size-[3px] rounded-full border border-[#333333]" /></button>
            <button type="button" aria-label="浏览器" className="flex h-[92px] items-center justify-center rounded-l border border-r-0 border-l-2 border-[#669999] bg-[#ccccff]"><span className="size-[3px] rounded-full border border-[#333333]" /></button>
          </div>
        </aside>
        <Viewport />
        <FeatureBar />
      </div>

      <RecorderWindow />
      <ChatPopup />
    </div>
  );
}
